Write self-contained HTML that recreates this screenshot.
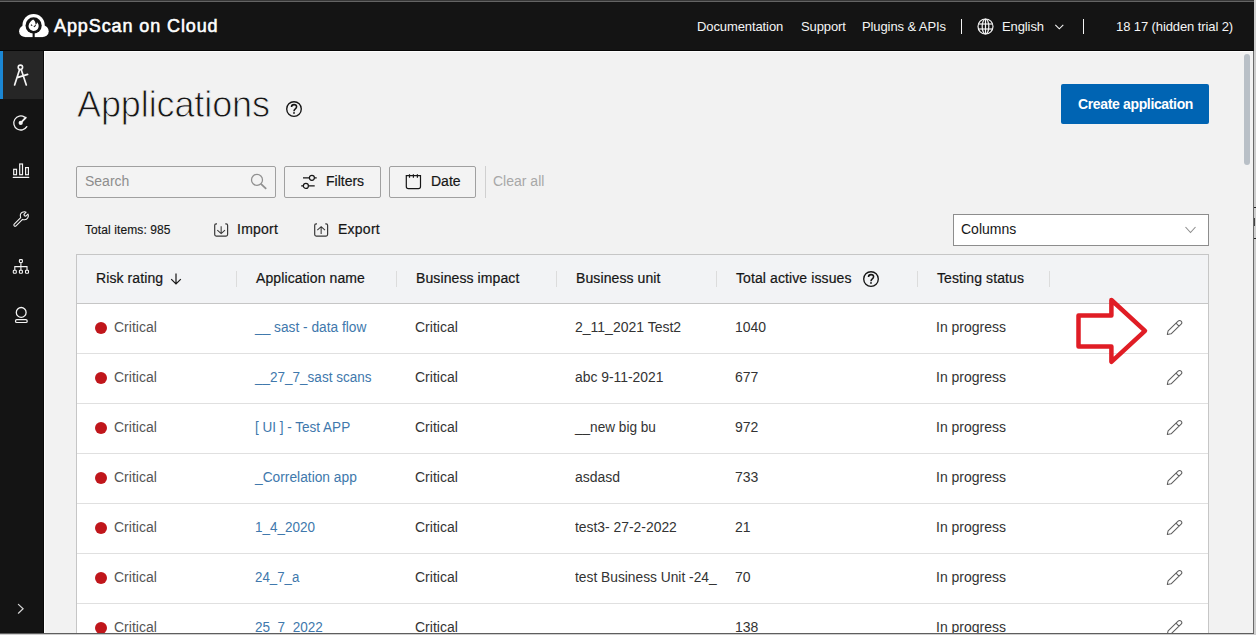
<!DOCTYPE html>
<html><head><meta charset="utf-8">
<style>
*{margin:0;padding:0;box-sizing:border-box}
html,body{width:1256px;height:635px;overflow:hidden;background:#cfcfcf;font-family:"Liberation Sans",sans-serif;color:#161616}
.abs{position:absolute}
#frame{position:absolute;left:0;top:0;width:1253px;height:633px;background:#f2f2f2;overflow:hidden}
#topline{left:0;top:0;width:1254px;height:2px;background:#646464;border-top:1px solid #373737}
#hdr{left:0;top:2px;width:1253px;height:49px;background:#141414}
#side{left:0;top:51px;width:44px;height:584px;background:#141414}
.t{position:absolute;white-space:nowrap;line-height:1}
.nav{color:#f4f4f4;font-size:13px;letter-spacing:-0.1px}
.sep{position:absolute;width:1px;background:#c6c6c6}
.btn{position:absolute;border:1px solid #a0a0a0;background:#f3f3f3;border-radius:2px}
.cell{position:absolute;font-size:14px;white-space:nowrap;line-height:1;color:#333}
.hcell{position:absolute;font-size:14px;white-space:nowrap;line-height:1;letter-spacing:0.1px;color:#161616;top:271px;-webkit-text-stroke:0.2px #161616}
.row{position:absolute;left:77px;width:1131px;height:50px;background:#fff;border-top:1px solid #e0e0e0}
.dot{position:absolute;width:12px;height:12px;border-radius:50%;background:#c0161b}
.lnk{color:#4078ac}
.rowsep{position:absolute;left:77px;width:1131px;height:1px;background:#e0e0e0}
.hsep{position:absolute;top:271px;width:1px;height:16px;background:#dcdcdc}
</style></head><body>
<svg width="0" height="0" style="position:absolute">
<defs>
</defs></svg>
<div id="frame">
<div id="hdr" class="abs">
  <!-- logo -->
  <svg class="abs" style="left:0;top:-2px" width="52" height="44" viewBox="0 0 52 44">
    <g fill="#fff">
      <circle cx="33.6" cy="25.2" r="11.1"/>
      <circle cx="25" cy="31.2" r="5.9"/>
      <circle cx="42.8" cy="31.2" r="5.9"/>
      <rect x="25" y="27" width="17.8" height="10.1"/>
    </g>
    <circle cx="33.6" cy="25.4" r="8.1" fill="#141414"/>
    <rect x="32.6" y="30" width="2.1" height="8" fill="#141414"/>
    <g transform="translate(33.6 25.3) scale(1.12) translate(-33.6 -25.3)"><path d="M33.2 20.2 C31.5 21.3 29.3 23 29.1 25.8 C29 28.4 31 30.2 33.6 30.3 C36.3 30.3 38.2 28.3 38.1 25.7 C38 24.2 37.4 23.4 36.6 22.6 C36.6 23.8 36 24.6 35.3 24.9 C35.6 23 34.7 21.2 33.2 20.2 Z" fill="#fff"/>
    <path d="M31.2 24.8 L32.4 25.6 M33.8 26.6 L35.6 25.4" stroke="#141414" stroke-width="0.9" fill="none"/></g>
  </svg>
  <div class="t" style="left:54px;top:15px;font-size:18px;color:#fff;letter-spacing:0.9px;-webkit-text-stroke:0.55px #fff">AppScan on Cloud</div>
  <div class="t nav" style="left:697px;top:18px">Documentation</div>
  <div class="t nav" style="left:801px;top:18px">Support</div>
  <div class="t nav" style="left:862px;top:18px">Plugins &amp; APIs</div>
  <div class="sep" style="left:961px;top:17px;height:15px;background:#f4f4f4"></div>
  <svg class="abs" style="left:977px;top:16px" width="17" height="17" viewBox="0 0 17 17" fill="none" stroke="#f4f4f4" stroke-width="1.2">
    <circle cx="8.5" cy="8.5" r="7.5"/><ellipse cx="8.5" cy="8.5" rx="3.3" ry="7.5"/><line x1="8.5" y1="1" x2="8.5" y2="16"/><line x1="1.3" y1="6" x2="15.7" y2="6"/><line x1="1.3" y1="11" x2="15.7" y2="11"/>
  </svg>
  <div class="t nav" style="left:1002px;top:18px">English</div>
  <svg class="abs" style="left:1054px;top:19.5px" width="10" height="8" viewBox="0 0 10 8" fill="none" stroke="#f4f4f4" stroke-width="1.1"><path d="M1.3 2.8 L5.3 6.8 L9.3 2.8"/></svg>
  <div class="sep" style="left:1083px;top:17px;height:15px;background:#f4f4f4"></div>
  <div class="t nav" style="left:1116px;top:18px">18 17 (hidden trial 2)</div>
</div>

<div id="side" class="abs">
  <div class="abs" style="left:0;top:0;width:44px;height:48px;background:#262626"></div>
  <div class="abs" style="left:0;top:0;width:3px;height:48px;background:#1b87d4"></div>
</div>
<div class="abs" style="left:44px;top:51px;width:1px;height:582px;background:#fdfdfd"></div>
<div class="abs" style="left:44px;top:51px;width:1209px;height:1px;background:#fdfdfd"></div>
<div class="abs" style="left:0;top:50px;width:1253px;height:1px;background:#060606"></div>
<div class="abs" style="left:43px;top:51px;width:1px;height:582px;background:#0a0a0a"></div>
<svg class="abs" style="left:0;top:51px" width="44" height="582" viewBox="0 51 44 582" fill="none" stroke="#f4f4f4" stroke-width="1.4" stroke-linecap="round">
  <!-- compass -->
  <circle cx="20.4" cy="67.3" r="2.2" stroke-width="1.6"/>
  <path d="M19.6 69.6 L14.6 85 M21.2 69.6 L26.3 85 M18 77.4 L27.6 74.4" stroke-width="1.7"/>
  <!-- gauge -->
  <path d="M24.6 117.1 A7 7 0 1 0 26.8 126.6" stroke-width="1.3"/>
  <path d="M20.7 122.9 L25.8 117.6" stroke-width="1.9"/>
  <circle cx="20.7" cy="122.9" r="2.1" fill="#f4f4f4" stroke="none"/>
  <!-- bars -->
  <rect x="13.7" y="169.3" width="2.8" height="5.4" stroke-width="1.2"/>
  <rect x="19.7" y="164" width="2.8" height="10.7" stroke-width="1.2"/>
  <rect x="25.6" y="167.6" width="2.8" height="7.1" stroke-width="1.2"/>
  <path d="M13.2 177.3 L28.8 177.3" stroke-width="1.2"/>
  <!-- wrench -->
  <g transform="translate(13.6 211.4) scale(0.9) translate(-13.3 -210.4)"><path d="M14 224.5 L21.2 217.3 C20.3 214.8 21 212.5 23 211.4 C24.5 210.6 26 210.6 27.2 211.2 L24.8 213.6 L25.3 215.2 L26.9 215.7 L29.3 213.3 C29.9 214.5 29.9 216 29.1 217.5 C28 219.5 25.7 220.2 23.2 219.3 L16 226.5 C15.4 227.1 14.6 227.1 14 226.5 C13.4 225.9 13.4 225.1 14 224.5 Z" stroke-width="1.2" stroke-linejoin="round"/></g>
  <!-- hierarchy -->
  <rect x="19.4" y="259.6" width="3" height="2.9" rx="0.8" stroke-width="1.1"/>
  <rect x="13.3" y="270.3" width="3" height="3" rx="0.8" stroke-width="1.1"/>
  <rect x="19.4" y="270.3" width="3" height="3" rx="0.8" stroke-width="1.1"/>
  <rect x="25.5" y="270.3" width="3" height="3" rx="0.8" stroke-width="1.1"/>
  <path d="M20.9 262.5 L20.9 270.3 M14.8 270.3 L14.8 266.6 L27 266.6 L27 270.3" stroke-width="1.1" stroke-linecap="butt"/>
  <!-- person -->
  <circle cx="21.2" cy="312.4" r="4.9" stroke-width="1.3"/>
  <rect x="15.5" y="319.6" width="11.7" height="2.9" rx="1.3" stroke-width="1.2"/>
  <!-- chevron -->
  <path d="M18.4 604.4 L23.1 608.8 L18.4 613.2" stroke-width="1.2" stroke="#d6d6d6"/>
</svg>

<!-- title -->
<div class="t" style="left:77px;top:87px;font-size:36px;color:#161616;letter-spacing:-0.1px;-webkit-text-stroke:0.85px #f2f2f2">Applications</div>
<svg class="abs" style="left:285px;top:100px" width="18" height="18" viewBox="0 0 18 18"><circle cx="9" cy="9" r="7.3" fill="none" stroke="#161616" stroke-width="1.35"/><path d="M6.5 7 C6.5 5.4 7.6 4.6 9 4.6 C10.5 4.6 11.6 5.5 11.6 6.8 C11.6 8 10.8 8.6 10.1 9.1 C9.3 9.7 9 10.2 9 11.2" fill="none" stroke="#161616" stroke-width="1.55"/><circle cx="9" cy="12.9" r="0.95" fill="#161616"/></svg>

<!-- create button -->
<div class="abs" style="left:1061px;top:84px;width:148px;height:40px;background:#0064b3;border-radius:2px"></div>
<div class="t" style="left:1078px;top:97px;font-size:14px;font-weight:bold;color:#fff;letter-spacing:-0.35px">Create application</div>

<!-- toolbar -->
<div class="btn" style="left:76px;top:166px;width:200px;height:32px"></div>
<div class="t" style="left:85px;top:174px;font-size:14px;color:#8d8d8d">Search</div>
<svg class="abs" style="left:248px;top:170px" width="22" height="22" viewBox="0 0 22 22" fill="none" stroke="#909090" stroke-width="1.25"><circle cx="9" cy="9.9" r="5.5"/><path d="M12.9 13.8 L18.2 18.9" stroke-width="1.8"/></svg>
<div class="btn" style="left:284px;top:166px;width:97px;height:32px"></div>
<svg class="abs" style="left:300px;top:172px" width="20" height="20" viewBox="0 0 20 20" fill="none" stroke="#161616" stroke-width="1.2"><path d="M3 5.8 L9.4 5.8 M14.4 5.8 L16.7 5.8 M1.2 13.9 L3.4 13.9 M8.4 13.9 L14.7 13.9"/><circle cx="11.9" cy="5.8" r="2.5"/><circle cx="5.9" cy="13.9" r="2.5"/></svg>
<div class="t" style="left:326px;top:174px;font-size:14px;color:#161616;-webkit-text-stroke:0.2px #161616">Filters</div>
<div class="btn" style="left:389px;top:166px;width:87px;height:32px"></div>
<svg class="abs" style="left:403px;top:172px" width="20" height="20" viewBox="0 0 20 20" fill="none" stroke="#161616" stroke-width="1.2"><path d="M3.3 3.6 L3.3 14.5 C3.3 15.8 4.2 16.6 5.4 16.6 L15.4 16.6 C16.6 16.6 17.5 15.8 17.5 14.5 L17.5 3.6 Z"/><path d="M6.5 2.3 L6.5 5.8 M10.4 2.3 L10.4 5.8 M14.4 2.3 L14.4 5.8"/></svg>
<div class="t" style="left:431px;top:174px;font-size:14px;color:#161616;-webkit-text-stroke:0.2px #161616">Date</div>
<div class="sep" style="left:485px;top:166px;height:32px;background:#d0d0d0"></div>
<div class="t" style="left:493px;top:174px;font-size:14px;color:#a8a8a8">Clear all</div>

<div class="t" style="left:85px;top:224px;font-size:12px;color:#161616;letter-spacing:0.1px;-webkit-text-stroke:0.15px #161616">Total items: 985</div>
<svg class="abs" style="left:211px;top:221px" width="20" height="18" viewBox="0 0 20 18" fill="none" stroke="#393939" stroke-width="1.2"><path d="M6 2.8 L5.2 2.8 Q3.7 2.8 3.7 4.3 L3.7 13.6 Q3.7 15.1 5.2 15.1 L15.1 15.1 Q16.6 15.1 16.6 13.6 L16.6 4.3 Q16.6 2.8 15.1 2.8 L14.3 2.8"/><path d="M10.15 5.3 L10.15 12.6 M6.3 9.1 L10.15 12.6 L14 9.1" stroke-width="1.05"/></svg>
<div class="t" style="left:237px;top:222px;font-size:14px;color:#161616;-webkit-text-stroke:0.2px #161616;letter-spacing:0.25px">Import</div>
<svg class="abs" style="left:311px;top:221px" width="20" height="18" viewBox="0 0 20 18" fill="none" stroke="#393939" stroke-width="1.2"><path d="M6 2.8 L5.2 2.8 Q3.7 2.8 3.7 4.3 L3.7 13.6 Q3.7 15.1 5.2 15.1 L15.1 15.1 Q16.6 15.1 16.6 13.6 L16.6 4.3 Q16.6 2.8 15.1 2.8 L14.3 2.8"/><path d="M10.15 12.9 L10.15 5.6 M6.3 9.1 L10.15 5.6 L14 9.1" stroke-width="1.05"/></svg>
<div class="t" style="left:338px;top:222px;font-size:14px;color:#161616;-webkit-text-stroke:0.2px #161616;letter-spacing:0.25px">Export</div>

<div class="abs" style="left:953px;top:214px;width:256px;height:32px;background:#fff;border:1px solid #8d8d8d"></div>
<div class="t" style="left:961px;top:222px;font-size:14px;color:#161616">Columns</div>
<svg class="abs" style="left:1184px;top:225px" width="13" height="10" viewBox="0 0 13 10" fill="none" stroke="#8d8d8d" stroke-width="1.1"><path d="M1.5 2 L6.5 7.5 L11.5 2"/></svg>

<!-- table -->
<div class="abs" style="left:76px;top:254px;width:1133px;height:381px;border:1px solid #c6c6c6;background:#fff"></div>
<div class="abs" style="left:77px;top:255px;width:1131px;height:49px;background:#f2f3f5;border-bottom:1px solid #c6c6c6"></div>
<div class="hcell" style="left:96px">Risk rating</div>
<div class="hcell" style="left:256px">Application name</div>
<div class="hcell" style="left:416px">Business impact</div>
<div class="hcell" style="left:576px">Business unit</div>
<div class="hcell" style="left:736px">Total active issues</div>
<div class="hcell" style="left:937px">Testing status</div>
<div class="hsep" style="left:236px"></div><div class="hsep" style="left:396px"></div><div class="hsep" style="left:556px"></div><div class="hsep" style="left:716px"></div><div class="hsep" style="left:917px"></div><div class="hsep" style="left:1049px"></div>
<svg class="abs" style="left:169px;top:272px" width="14" height="14" viewBox="0 0 14 14" fill="none" stroke="#161616" stroke-width="1.2"><path d="M7 1.5 L7 12 M2.2 7.2 L7 12 L11.8 7.2"/></svg>
<svg class="abs" style="left:862px;top:270px" width="18" height="18" viewBox="0 0 18 18"><circle cx="9" cy="9" r="7.3" fill="none" stroke="#161616" stroke-width="1.35"/><path d="M6.5 7 C6.5 5.4 7.6 4.6 9 4.6 C10.5 4.6 11.6 5.5 11.6 6.8 C11.6 8 10.8 8.6 10.1 9.1 C9.3 9.7 9 10.2 9 11.2" fill="none" stroke="#161616" stroke-width="1.55"/><circle cx="9" cy="12.9" r="0.95" fill="#161616"/></svg>


<div id="rows">
<div class="rowsep" style="top:353px"></div>
<div class="dot" style="left:95px;top:322px"></div>
<div class="cell" style="left:114px;top:320px;color:#555">Critical</div>
<div class="cell lnk" style="left:255px;top:320px;transform:scaleX(0.9798);transform-origin:0 0">__ sast - data flow</div>
<div class="cell" style="left:415px;top:320px">Critical</div>
<div class="cell" style="left:575px;top:320px">2_11_2021 Test2</div>
<div class="cell" style="left:735px;top:320px">1040</div>
<div class="cell" style="left:936px;top:320px">In progress</div>
<svg class="abs pencil" viewBox="0 -1 17 18" style="left:1166px;top:319px" width="17" height="18"><path d="M1.3 14.5 L2.1 10.8 L12.1 1.2 A2.12 2.12 0 0 1 15.1 4.2 L5.1 13.8 Z M10 3.1 L13 6.1" fill="none" stroke="#5e5e5e" stroke-width="1.05" stroke-linejoin="round"/></svg>
<div class="rowsep" style="top:403px"></div>
<div class="dot" style="left:95px;top:372px"></div>
<div class="cell" style="left:114px;top:370px;color:#555">Critical</div>
<div class="cell lnk" style="left:255px;top:370px;transform:scaleX(0.9652);transform-origin:0 0">__27_7_sast scans</div>
<div class="cell" style="left:415px;top:370px">Critical</div>
<div class="cell" style="left:575px;top:370px;transform:scaleX(0.9910);transform-origin:0 0">abc 9-11-2021</div>
<div class="cell" style="left:735px;top:370px">677</div>
<div class="cell" style="left:936px;top:370px">In progress</div>
<svg class="abs pencil" viewBox="0 -1 17 18" style="left:1166px;top:369px" width="17" height="18"><path d="M1.3 14.5 L2.1 10.8 L12.1 1.2 A2.12 2.12 0 0 1 15.1 4.2 L5.1 13.8 Z M10 3.1 L13 6.1" fill="none" stroke="#5e5e5e" stroke-width="1.05" stroke-linejoin="round"/></svg>
<div class="rowsep" style="top:453px"></div>
<div class="dot" style="left:95px;top:422px"></div>
<div class="cell" style="left:114px;top:420px;color:#555">Critical</div>
<div class="cell lnk" style="left:255px;top:420px;transform:scaleX(0.9655);transform-origin:0 0">[ UI ] - Test APP</div>
<div class="cell" style="left:415px;top:420px">Critical</div>
<div class="cell" style="left:575px;top:420px;transform:scaleX(0.9712);transform-origin:0 0">__new big bu</div>
<div class="cell" style="left:735px;top:420px">972</div>
<div class="cell" style="left:936px;top:420px">In progress</div>
<svg class="abs pencil" viewBox="0 -1 17 18" style="left:1166px;top:419px" width="17" height="18"><path d="M1.3 14.5 L2.1 10.8 L12.1 1.2 A2.12 2.12 0 0 1 15.1 4.2 L5.1 13.8 Z M10 3.1 L13 6.1" fill="none" stroke="#5e5e5e" stroke-width="1.05" stroke-linejoin="round"/></svg>
<div class="rowsep" style="top:503px"></div>
<div class="dot" style="left:95px;top:472px"></div>
<div class="cell" style="left:114px;top:470px;color:#555">Critical</div>
<div class="cell lnk" style="left:255px;top:470px;transform:scaleX(0.9836);transform-origin:0 0">_Correlation app</div>
<div class="cell" style="left:415px;top:470px">Critical</div>
<div class="cell" style="left:575px;top:470px">asdasd</div>
<div class="cell" style="left:735px;top:470px">733</div>
<div class="cell" style="left:936px;top:470px">In progress</div>
<svg class="abs pencil" viewBox="0 -1 17 18" style="left:1166px;top:469px" width="17" height="18"><path d="M1.3 14.5 L2.1 10.8 L12.1 1.2 A2.12 2.12 0 0 1 15.1 4.2 L5.1 13.8 Z M10 3.1 L13 6.1" fill="none" stroke="#5e5e5e" stroke-width="1.05" stroke-linejoin="round"/></svg>
<div class="rowsep" style="top:553px"></div>
<div class="dot" style="left:95px;top:522px"></div>
<div class="cell" style="left:114px;top:520px;color:#555">Critical</div>
<div class="cell lnk" style="left:255px;top:520px;transform:scaleX(0.9647);transform-origin:0 0">1_4_2020</div>
<div class="cell" style="left:415px;top:520px">Critical</div>
<div class="cell" style="left:575px;top:520px;transform:scaleX(0.9912);transform-origin:0 0">test3- 27-2-2022</div>
<div class="cell" style="left:735px;top:520px">21</div>
<div class="cell" style="left:936px;top:520px">In progress</div>
<svg class="abs pencil" viewBox="0 -1 17 18" style="left:1166px;top:519px" width="17" height="18"><path d="M1.3 14.5 L2.1 10.8 L12.1 1.2 A2.12 2.12 0 0 1 15.1 4.2 L5.1 13.8 Z M10 3.1 L13 6.1" fill="none" stroke="#5e5e5e" stroke-width="1.05" stroke-linejoin="round"/></svg>
<div class="rowsep" style="top:603px"></div>
<div class="dot" style="left:95px;top:572px"></div>
<div class="cell" style="left:114px;top:570px;color:#555">Critical</div>
<div class="cell lnk" style="left:255px;top:570px;transform:scaleX(0.9486);transform-origin:0 0">24_7_a</div>
<div class="cell" style="left:415px;top:570px">Critical</div>
<div class="cell" style="left:575px;top:570px;transform:scaleX(0.9840);transform-origin:0 0">test Business Unit -24_</div>
<div class="cell" style="left:735px;top:570px">70</div>
<div class="cell" style="left:936px;top:570px">In progress</div>
<svg class="abs pencil" viewBox="0 -1 17 18" style="left:1166px;top:569px" width="17" height="18"><path d="M1.3 14.5 L2.1 10.8 L12.1 1.2 A2.12 2.12 0 0 1 15.1 4.2 L5.1 13.8 Z M10 3.1 L13 6.1" fill="none" stroke="#5e5e5e" stroke-width="1.05" stroke-linejoin="round"/></svg>
<div class="rowsep" style="top:653px"></div>
<div class="dot" style="left:95px;top:622px"></div>
<div class="cell" style="left:114px;top:620px;color:#555">Critical</div>
<div class="cell lnk" style="left:255px;top:620px;transform:scaleX(0.9672);transform-origin:0 0">25_7_2022</div>
<div class="cell" style="left:415px;top:620px">Critical</div>
<div class="cell" style="left:575px;top:620px"></div>
<div class="cell" style="left:735px;top:620px">138</div>
<div class="cell" style="left:936px;top:620px">In progress</div>
<svg class="abs pencil" viewBox="0 -1 17 18" style="left:1166px;top:619px" width="17" height="18"><path d="M1.3 14.5 L2.1 10.8 L12.1 1.2 A2.12 2.12 0 0 1 15.1 4.2 L5.1 13.8 Z M10 3.1 L13 6.1" fill="none" stroke="#5e5e5e" stroke-width="1.05" stroke-linejoin="round"/></svg>
</div><!--/rows-->
<svg class="abs" style="left:1070px;top:290px" width="86" height="80" viewBox="1070 290 86 80"><path d="M1078.5 315.5 L1111.4 315.5 L1111.4 300 L1145 330.8 L1111.4 361.8 L1111.4 346.5 L1078.5 346.5 Z" fill="none" stroke="#e01d25" stroke-width="4.5" stroke-linejoin="round"/></svg>

</div>
<div id="topline" class="abs"></div>
<div class="abs" style="left:1253px;top:2px;width:1px;height:49px;background:#141414"></div>
<div class="abs" style="left:1253px;top:51px;width:1px;height:583px;background:#6a6a6a"></div>
<div class="abs" style="left:0;top:633px;width:1254px;height:1px;background:#5e5e5e"></div>
<div class="abs" style="left:1244px;top:54px;width:6px;height:111px;background:#b9c0c7;border-radius:3px"></div>
<div class="abs" style="left:1254px;top:207px;width:2px;height:1px;background:#222"></div>
<div class="abs" style="left:1254px;top:238px;width:2px;height:1px;background:#222"></div>
<div class="abs" style="left:1254px;top:218px;width:1px;height:8px;background:#444"></div>
</body></html>
